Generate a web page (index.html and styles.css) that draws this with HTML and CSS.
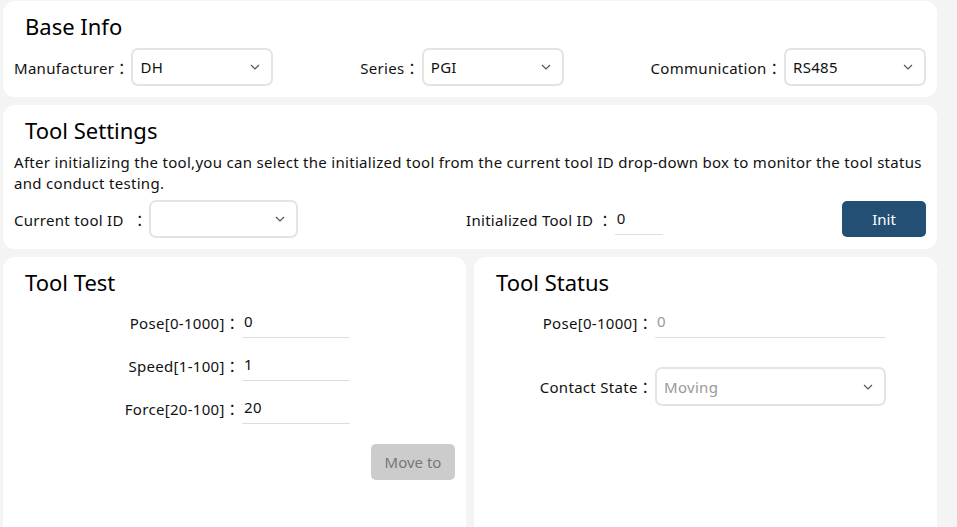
FILE: index.html
```html
<!DOCTYPE html>
<html>
<head>
    <title>Tool Config</title>
    <link rel="stylesheet" href="styles.css">
</head>
<body>
    <div class="page">
        <div class="card">
            <h2>Base Info</h2>
            <div class="base-row">
                <div class="field">
                    <span class="label">Manufacturer：</span>
                    <div class="select"><span>DH</span><svg width="10" height="6" viewBox="0 0 10 6"><path d="M1 1 L5 5 L9 1" fill="none" stroke="#555" stroke-width="1.2"/></svg></div>
                </div>
                <div class="field">
                    <span class="label">Series：</span>
                    <div class="select"><span>PGI</span><svg width="10" height="6" viewBox="0 0 10 6"><path d="M1 1 L5 5 L9 1" fill="none" stroke="#555" stroke-width="1.2"/></svg></div>
                </div>
                <div class="field">
                    <span class="label">Communication：</span>
                    <div class="select"><span>RS485</span><svg width="10" height="6" viewBox="0 0 10 6"><path d="M1 1 L5 5 L9 1" fill="none" stroke="#555" stroke-width="1.2"/></svg></div>
                </div>
            </div>
        </div>

        <div class="card">
            <h2>Tool Settings</h2>
            <p class="hint">After initializing the tool,you can select the initialized tool from the current tool ID drop-down box to monitor the tool status and conduct testing.</p>
            <div class="settings-row">
                <div class="field">
                    <span class="label">Current tool ID&nbsp;&nbsp;：</span>
                    <div class="select select-id"><span></span><svg width="10" height="6" viewBox="0 0 10 6"><path d="M1 1 L5 5 L9 1" fill="none" stroke="#555" stroke-width="1.2"/></svg></div>
                </div>
                <div class="field">
                    <span class="label">Initialized Tool ID&nbsp;：</span>
                    <div class="line-input short">0</div>
                </div>
                <button class="btn-init">Init</button>
            </div>
        </div>

        <div class="bottom">
            <div class="card tall">
                <h2>Tool Test</h2>
                <div class="form test-form">
                    <span class="label">Pose[0-1000]：</span>
                    <div class="line-input">0</div>
                    <span class="label">Speed[1-100]：</span>
                    <div class="line-input">1</div>
                    <span class="label">Force[20-100]：</span>
                    <div class="line-input">20</div>
                </div>
                <div class="actions">
                    <button class="btn-move">Move to</button>
                </div>
            </div>
            <div class="card tall">
                <h2>Tool Status</h2>
                <div class="form status-form">
                    <span class="label">Pose[0-1000]：</span>
                    <div class="line-input muted">0</div>
                    <span class="label">Contact State：</span>
                    <div class="select muted"><span>Moving</span><svg width="10" height="6" viewBox="0 0 10 6"><path d="M1 1 L5 5 L9 1" fill="none" stroke="#555" stroke-width="1.2"/></svg></div>
                </div>
            </div>
        </div>
    </div>
</body>
</html>
```

FILE: styles.css
```css
body {
    margin: 0;
    background: #f4f4f4;
    font-family: "Noto Sans", "Noto Sans CJK TC", sans-serif;
    font-size: 15px;
    letter-spacing: 0.3px;
    color: #111;
    overflow: hidden;
}
.page {
    width: 934px;
    padding: 1px 0 0 3px;
}
.card {
    background: white;
    border-radius: 12px;
    padding: 10px 11px 11px;
    margin-bottom: 8px;
}
h2 {
    margin: 0 0 7px 11px;
    font-size: 22px;
    font-weight: normal;
    line-height: 28px;
    padding-top: 1px;
    padding-bottom: 1px;
    letter-spacing: 0;
    color: #000;
}
.field {
    display: flex;
    align-items: center;
}
.label {
    white-space: nowrap;
}
.base-row {
    display: flex;
    justify-content: space-between;
}
.select {
    box-sizing: border-box;
    width: 142px;
    height: 38px;
    margin-left: 2px;
    border: 2px solid #e4e4e4;
    border-radius: 7px;
    padding: 0 11px 0 7px;
    display: flex;
    align-items: center;
    justify-content: space-between;
}
.select-id {
    width: 149px;
}
.hint {
    margin: 0 0 6px;
    line-height: 21px;
}
.settings-row {
    display: grid;
    grid-template-columns: 452px 1fr auto;
    align-items: center;
}
.line-input {
    box-sizing: border-box;
    height: 32px;
    line-height: 30px;
    border-bottom: 1px solid #dedede;
    padding-left: 2px;
}
.short {
    width: 48px;
    margin-left: 2px;
}
.btn-init {
    width: 84px;
    height: 36px;
    border: none;
    border-radius: 5px;
    background: #244f74;
    color: white;
    font-family: inherit;
    font-size: 15px;
}
.bottom {
    display: grid;
    grid-template-columns: 463px 463px;
    gap: 8px;
}
.tall {
    height: 249px;
    margin-bottom: 0;
    border-radius: 12px 12px 0 0;
}
.form {
    display: grid;
    align-items: center;
    margin-top: 9px;
}
.form .label {
    text-align: right;
}
.test-form {
    grid-template-columns: 226px 108px;
    column-gap: 2px;
    row-gap: 11px;
}
.status-form {
    grid-template-columns: 168px 231px;
    column-gap: 2px;
    row-gap: 29px;
}
.status-form .select {
    width: 231px;
    height: 39px;
    margin-left: 0;
}
.muted span,
.line-input.muted {
    color: #999;
}
.actions {
    display: flex;
    justify-content: flex-end;
    margin-top: 20px;
}
.btn-move {
    width: 84px;
    height: 36px;
    border: none;
    border-radius: 5px;
    background: #cccccc;
    color: #777;
    font-family: inherit;
    font-size: 15px;
}
```
